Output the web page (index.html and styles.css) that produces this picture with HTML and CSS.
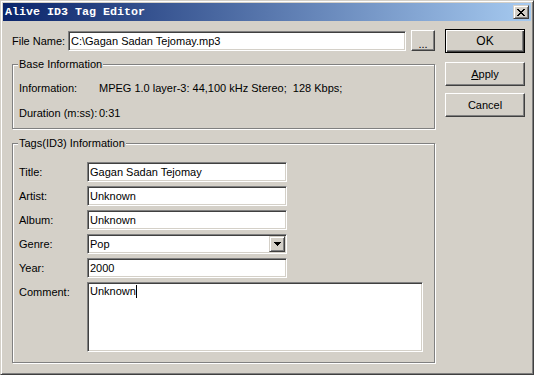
FILE: index.html
```html
<!DOCTYPE html>
<html lang="en">

<head>
    <meta charset="UTF-8">
    <title>Alive ID3 Tag Editor</title>
    <link rel="stylesheet" href="styles.css">
</head>

<body>
    <div class="window">
        <div class="titlebar">
            <span class="title">Alive ID3 Tag Editor</span>
            <button class="close" aria-label="Close">
                <svg width="8" height="7" viewBox="0 0 8 7" shape-rendering="crispEdges">
                    <path d="M0 0h2v1H0zM6 0h2v1H6zM1 1h2v1H1zM5 1h2v1H5zM2 2h4v1H2zM3 3h2v1H3zM2 4h4v1H2zM1 5h2v1H1zM5 5h2v1H5zM0 6h2v1H0zM6 6h2v1H6z"/>
                </svg>
            </button>
        </div>
        <div class="content">
            <div class="main">
                <div class="file-row">
                    <label for="filename">File Name:</label>
                    <input id="filename" class="field file-field" value="C:\Gagan Sadan Tejomay.mp3">
                    <button class="btn browse">...</button>
                </div>
                <div class="group base">
                    <span class="legend">Base Information</span>
                    <div class="info-rows">
                        <div class="info-row">
                            <span class="info-label">Information:</span>
                            <span>MPEG 1.0 layer-3: 44,100 kHz Stereo;&nbsp; 128 Kbps;</span>
                        </div>
                        <div class="info-row">
                            <span class="info-label">Duration (m:ss):</span>
                            <span>0:31</span>
                        </div>
                    </div>
                </div>
                <div class="group tags">
                    <span class="legend">Tags(ID3) Information</span>
                    <div class="tag-grid">
                        <label>Title:</label>
                        <input class="field short" value="Gagan Sadan Tejomay">
                        <label>Artist:</label>
                        <input class="field short" value="Unknown">
                        <label>Album:</label>
                        <input class="field short" value="Unknown">
                        <label>Genre:</label>
                        <div class="field short select">
                            <span>Pop</span>
                            <span class="drop">
                                <svg width="7" height="4" viewBox="0 0 7 4" shape-rendering="crispEdges">
                                    <path d="M0 0h7v1H0zM1 1h5v1H1zM2 2h3v1H2zM3 3h1v1H3z"/>
                                </svg>
                            </span>
                        </div>
                        <label>Year:</label>
                        <input class="field short" value="2000">
                        <label>Comment:</label>
                        <div class="field comment">Unknown<span class="caret"></span></div>
                    </div>
                </div>
            </div>
            <div class="buttons">
                <button class="btn default">OK</button>
                <button class="btn apply"><u>A</u>pply</button>
                <button class="btn cancel">Cancel</button>
            </div>
        </div>
    </div>
</body>

</html>
```

FILE: styles.css
```css
body {
    margin: 0;
    background: #D4D0C8;
    color: #000;
    font-family: "Liberation Sans", Arial, sans-serif;
    font-size: 11px;
}

.window {
    box-sizing: border-box;
    width: 534px;
    height: 375px;
    padding: 2px;
    background: #D4D0C8;
    border: 1px solid;
    border-color: #D4D0C8 #404040 #404040 #D4D0C8;
    box-shadow: inset 1px 1px #fff, inset -1px -1px #808080;
}

.titlebar {
    display: flex;
    align-items: center;
    height: 18px;
    padding: 0 2px;
    background: linear-gradient(to right, #0A246A, #A6CAF0);
    color: #fff;
}

.title {
    flex: 1;
    font-family: "Liberation Mono", monospace;
    font-weight: bold;
    font-size: 11.67px;
}

.close {
    display: flex;
    align-items: center;
    justify-content: center;
    box-sizing: border-box;
    width: 16px;
    height: 14px;
    padding: 0;
    background: #D4D0C8;
    border: 1px solid;
    border-color: #D4D0C8 #404040 #404040 #D4D0C8;
    box-shadow: inset 1px 1px #fff, inset -1px -1px #808080;
}

.content {
    display: flex;
    gap: 10px;
    padding: 8px 6px 0 9px;
}

.main {
    width: 423px;
    padding-top: 1px;
}

.file-row {
    display: flex;
    align-items: center;
    height: 21px;
}

.file-row label {
    width: 56px;
}

.field {
    box-sizing: border-box;
    height: 20px;
    margin: 0;
    padding: 0 2px;
    background: #fff;
    color: #000;
    font: inherit;
    border: 1px solid;
    border-color: #808080 #fff #fff #808080;
    box-shadow: inset 1px 1px #404040, inset -1px -1px #D4D0C8;
    outline: none;
}

.file-field {
    width: 338px;
}

.btn {
    box-sizing: border-box;
    height: 24px;
    margin: 0;
    padding: 0;
    background: #D4D0C8;
    color: #000;
    font: inherit;
    border: 1px solid;
    border-color: #fff #404040 #404040 #fff;
    box-shadow: inset -1px -1px #808080;
}

.btn.browse {
    width: 24px;
    height: 21px;
    margin-left: 5px;
    padding-top: 6px;
}

.btn.default {
    font-size: 12px;
    border-color: #000;
    box-shadow: inset 1px 1px #fff, inset -1px -1px #404040, inset -2px -2px #808080;
}

.btn.apply {
    margin-top: 9px;
}

.btn.cancel {
    margin-top: 7px;
}

.buttons {
    display: flex;
    flex-direction: column;
    width: 80px;
}

.group {
    box-sizing: border-box;
    border: 1px solid #808080;
    box-shadow: 1px 1px 0 #fff, inset 1px 1px 0 #fff;
}

.group.base {
    margin-top: 13px;
    height: 65px;
}

.group.tags {
    margin-top: 14px;
    height: 220px;
}

.legend {
    display: block;
    width: fit-content;
    margin: -7px 0 0 5px;
    padding: 0 1px;
    line-height: 13px;
    background: #D4D0C8;
}

.info-rows {
    margin-top: 5px;
    padding-left: 6px;
}

.info-row {
    display: flex;
    height: 25px;
    line-height: 25px;
    white-space: nowrap;
}

.info-label {
    flex: none;
    width: 80px;
}

.tag-grid {
    display: grid;
    grid-template-columns: 68px 1fr;
    row-gap: 4px;
    margin-top: 12px;
    padding-left: 6px;
}

.tag-grid label {
    line-height: 20px;
}

.field.short {
    width: 200px;
}

.select {
    display: flex;
    align-items: center;
}

.drop {
    display: flex;
    align-items: center;
    justify-content: center;
    box-sizing: border-box;
    width: 16px;
    height: 16px;
    margin-left: auto;
    margin-right: -1px;
    background: #D4D0C8;
    border: 1px solid;
    border-color: #D4D0C8 #404040 #404040 #D4D0C8;
    box-shadow: inset 1px 1px #fff, inset -1px -1px #808080;
}

.comment {
    width: 336px;
    height: 70px;
    padding: 2px 2px;
    line-height: 13px;
}

.caret {
    display: inline-block;
    width: 1px;
    height: 13px;
    vertical-align: top;
    background: #000;
}
```
